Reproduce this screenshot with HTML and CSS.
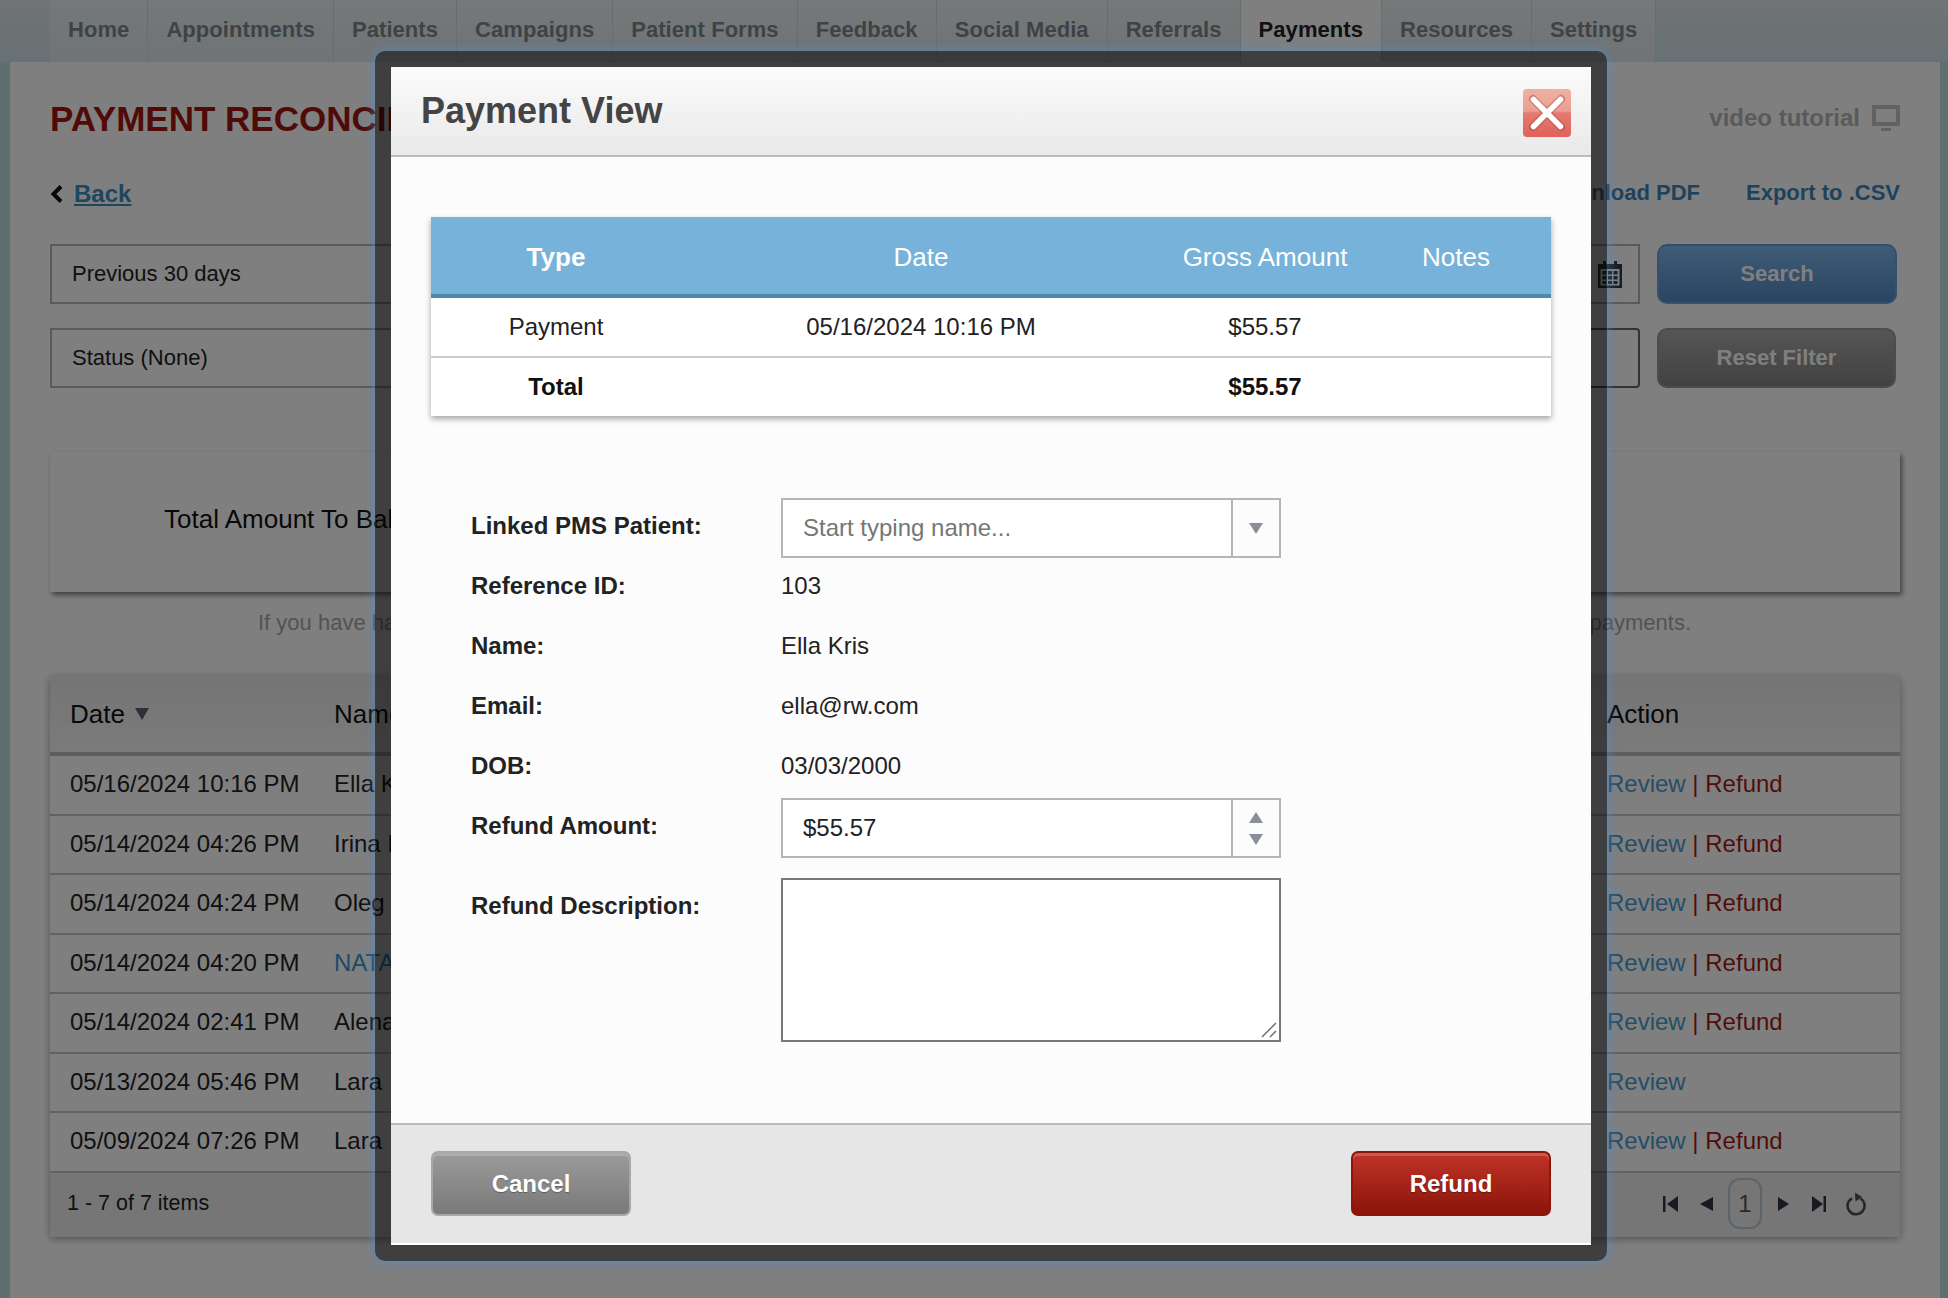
FILE: index.html
```html
<!DOCTYPE html>
<html lang="en">
<head>
<meta charset="utf-8">
<title>Payment Reconciliation</title>
<link rel="stylesheet" href="styles.css">
</head>
<body>
<nav class="topnav">
  <ul class="tabs">
    <li class="tab">Home</li>
    <li class="tab">Appointments</li>
    <li class="tab">Patients</li>
    <li class="tab">Campaigns</li>
    <li class="tab">Patient Forms</li>
    <li class="tab">Feedback</li>
    <li class="tab">Social Media</li>
    <li class="tab">Referrals</li>
    <li class="tab tab-active">Payments</li>
    <li class="tab">Resources</li>
    <li class="tab">Settings</li>
  </ul>
</nav>
<main class="panel">
  <div class="title-row">
    <h1 class="page-title">PAYMENT RECONCILIATION</h1>
    <a class="video-link">video tutorial
      <svg class="monitor" width="28" height="26" viewBox="0 0 28 26"><path d="M0 0h28v21H0z M4 4v13h20V4z" fill="#c4c4c4" fill-rule="evenodd"/><path d="M9 23h10v3H9z" fill="#c4c4c4"/></svg>
    </a>
  </div>
  <div class="link-row">
    <a class="back"><svg width="13" height="18" viewBox="0 0 13 18"><path d="M11 1.500 3.500 9l7.500 7.500" fill="none" stroke="#111" stroke-width="4"/></svg><span class="back-text">Back</span></a>
    <div class="exports"><a class="export">Download PDF</a><a class="export">Export to .CSV</a></div>
  </div>
  <div class="filters">
    <div class="filter">Previous 30 days</div>
    <div class="filter filter-date">
      <svg width="24" height="28" viewBox="0 0 24 28"><path d="M0 4h5V1h3v3h8V1h3v3h5v24H0z M2.500 9v16.500h19V9z" fill="#333b46" fill-rule="evenodd"/><g fill="#333b46"><rect x="4.500" y="11" width="4" height="3.500"/><rect x="10" y="11" width="4" height="3.500"/><rect x="15.500" y="11" width="4" height="3.500"/><rect x="4.500" y="16" width="4" height="3.500"/><rect x="10" y="16" width="4" height="3.500"/><rect x="15.500" y="16" width="4" height="3.500"/><rect x="4.500" y="21" width="4" height="3"/><rect x="10" y="21" width="4" height="3"/><rect x="15.500" y="21" width="4" height="3"/></g></svg>
    </div>
    <button class="btn-search">Search</button>
    <div class="filter">Status (None)</div>
    <div class="filter filter-dark"></div>
    <button class="btn-reset">Reset Filter</button>
  </div>
  <section class="total-card"><span class="total-text">Total Amount To Balance</span></section>
  <p class="note"><span>If you have had</span><span>payments.</span></p>
  <section class="grid">
    <div class="grid-head">
      <div class="cell">Date <span class="sort"></span></div>
      <div class="cell">Name</div>
      <div class="cell">Action</div>
    </div>
    <div class="grid-row"><div>05/16/2024 10:16 PM</div><div>Ella Kris</div><div><a class="review">Review</a><span class="sep"> | </span><a class="refund">Refund</a></div></div>
    <div class="grid-row"><div>05/14/2024 04:26 PM</div><div>Irina I</div><div><a class="review">Review</a><span class="sep"> | </span><a class="refund">Refund</a></div></div>
    <div class="grid-row"><div>05/14/2024 04:24 PM</div><div>Oleg</div><div><a class="review">Review</a><span class="sep"> | </span><a class="refund">Refund</a></div></div>
    <div class="grid-row"><div>05/14/2024 04:20 PM</div><div class="name-link">NATA</div><div><a class="review">Review</a><span class="sep"> | </span><a class="refund">Refund</a></div></div>
    <div class="grid-row"><div>05/14/2024 02:41 PM</div><div>Alena</div><div><a class="review">Review</a><span class="sep"> | </span><a class="refund">Refund</a></div></div>
    <div class="grid-row"><div>05/13/2024 05:46 PM</div><div>Lara</div><div><a class="review">Review</a></div></div>
    <div class="grid-row"><div>05/09/2024 07:26 PM</div><div>Lara</div><div><a class="review">Review</a><span class="sep"> | </span><a class="refund">Refund</a></div></div>
    <div class="grid-foot">
      <span>1 - 7 of 7 items</span>
      <div class="pager">
        <svg width="15" height="16" viewBox="0 0 15 16"><path d="M0 0h2.500v16H0z M15 0v16L4 8z" fill="#2e3440"/></svg>
        <svg class="pager-prev" width="13" height="14" viewBox="0 0 13 14"><path d="M13 0v14L0 7z" fill="#2e3440"/></svg>
        <span class="page-num">1</span>
        <svg class="pager-next" width="11" height="14" viewBox="0 0 11 14"><path d="M0 0v14l11-7z" fill="#2e3440"/></svg>
        <svg class="pager-last" width="14" height="16" viewBox="0 0 14 16"><path d="M0 0v16l11-8z M11.500 0H14v16h-2.500z" fill="#2e3440"/></svg>
        <svg class="pager-refresh" width="21" height="24" viewBox="0 0 21 24"><path d="M6 6.300A8.500 8.500 0 1 0 14.500 6.500" fill="none" stroke="#4b4f58" stroke-width="2.600"/><path d="M9 0.500 16 5 9.500 9.500z" fill="#4b4f58"/></svg>
      </div>
    </div>
  </section>
</main>

<div class="overlay"></div>

<div class="modal" role="dialog">
  <header class="modal-head">
    <h2 class="modal-title">Payment View</h2>
    <button class="close" aria-label="Close">
      <svg width="48" height="48" viewBox="0 0 48 48"><path d="M10 10 38 38M38 10 10 38" stroke="#9a3a33" stroke-opacity=".4" stroke-width="8" stroke-linecap="round"/><path d="M10.500 10.500 37.500 37.500M37.500 10.500 10.500 37.500" stroke="#fff" stroke-width="5.500" stroke-linecap="round"/></svg>
    </button>
  </header>
  <div class="modal-body">
    <div class="pay-table">
      <div class="pay-row pay-head"><div class="strong">Type</div><div>Date</div><div>Gross Amount</div><div>Notes</div></div>
      <div class="pay-row"><div>Payment</div><div>05/16/2024 10:16 PM</div><div>$55.57</div><div></div></div>
      <div class="pay-row pay-total"><div>Total</div><div></div><div>$55.57</div><div></div></div>
    </div>
    <form class="form">
      <div class="form-row">
        <label class="form-label">Linked PMS Patient:</label>
        <div class="combo"><input class="combo-input" placeholder="Start typing name..."><span class="combo-btn"><i class="arrow-down"></i></span></div>
      </div>
      <div class="form-row"><label class="form-label">Reference ID:</label><span class="form-value">103</span></div>
      <div class="form-row"><label class="form-label">Name:</label><span class="form-value">Ella Kris</span></div>
      <div class="form-row"><label class="form-label">Email:</label><span class="form-value">ella@rw.com</span></div>
      <div class="form-row"><label class="form-label">DOB:</label><span class="form-value">03/03/2000</span></div>
      <div class="form-row">
        <label class="form-label">Refund Amount:</label>
        <div class="combo"><input class="combo-input" value="$55.57"><span class="combo-btn combo-spin"><i class="arrow-up"></i><i class="arrow-down"></i></span></div>
      </div>
      <div class="form-row form-row-desc">
        <label class="form-label">Refund Description:</label>
        <div class="desc-wrap">
          <textarea class="desc"></textarea>
          <svg class="grip" width="16" height="16" viewBox="0 0 16 16"><path d="M1 15 15 1M9 15l6-6" fill="none" stroke="#6e6e6e" stroke-width="1.500"/></svg>
        </div>
      </div>
    </form>
  </div>
  <footer class="modal-foot">
    <button class="btn-cancel">Cancel</button>
    <button class="btn-refund">Refund</button>
  </footer>
</div>
</body>
</html>
```
FILE: styles.css
```css
* { box-sizing: border-box; }
html, body { margin: 0; height: 1298px; overflow: hidden; }
body {
  position: relative;
  font-family: "Liberation Sans", Arial, sans-serif;
  font-size: 24px;
  color: #222;
  background: #bedcde;
}
a { cursor: pointer; }

/* top navigation */
.topnav {
  height: 62px;
  padding-left: 50px;
  background: linear-gradient(#e0e8ea, #cfe2e8);
}
.tabs { display: flex; height: 62px; margin: 0; padding: 0; list-style: none; }
.tab {
  padding: 0 18px;
  line-height: 59px;
  font-size: 22px;
  font-weight: 700;
  letter-spacing: .06px;
  color: #7d868b;
  background: linear-gradient(#ecf1f3, #dfe8ec);
  border-right: 1px solid #d3dadd;
}
.tab-active { color: #222; background: #fff; }

/* page panel */
.panel {
  margin: 0 8px 0 10px;
  height: 1236px;
  padding: 29px 40px 0;
  background: #fff;
}
.title-row { display: flex; justify-content: space-between; align-items: center; height: 56px; }
.page-title { margin: 0; font-size: 35px; font-weight: 700; color: #a01510; }
.video-link { display: flex; align-items: center; gap: 12px; margin-top: -2px; font-weight: 700; color: #b4b4b4; }
.link-row { display: flex; justify-content: space-between; align-items: center; height: 60px; margin-top: 17px; }
.back { display: flex; align-items: center; gap: 11px; font-weight: 700; color: #3c8cbf; }
.back-text { text-decoration: underline; }
.exports { display: flex; gap: 46px; margin-top: -2px; }
.export { font-weight: 700; font-size: 22px; color: #3d85b8; }

.filters {
  display: grid;
  grid-template-columns: 1fr 1fr 244px;
  grid-auto-rows: 60px;
  column-gap: 16px;
  row-gap: 24px;
  margin-top: 20px;
}
.filter {
  display: flex;
  align-items: center;
  justify-content: flex-start;
  padding: 0 20px;
  font-size: 22px;
  border: 2px solid #b5b5b5;
}
.filter-date { justify-content: flex-end; padding-right: 16px; }
.filter-dark { border-color: #666; border-radius: 4px; }
.btn-search, .btn-reset {
  font: 700 22px "Liberation Sans", Arial, sans-serif;
  color: #fff;
  border-radius: 10px;
  margin-left: 1px;
}
.btn-search {
  width: 240px;
  background: linear-gradient(#7fb7ee, #528ac2);
  border: 2px solid #6aa2da;
  border-top-color: #5e9cd6;
}
.btn-reset {
  width: 239px;
  background: linear-gradient(#ababab, #848484);
  border: 2px solid #989898;
}

.total-card {
  height: 140px;
  margin-top: 64px;
  padding: 52px 0 0 114px;
  background: #fff;
  box-shadow: 2px 3px 5px rgba(0, 0, 0, .5);
}
.total-text { font-size: 26px; color: #111; }
.note {
  display: flex;
  justify-content: space-between;
  width: 1433px;
  margin: 16px 0 0 208px;
  line-height: 30px;
  font-size: 22px;
  color: #a6a6a6;
}

.grid {
  margin-top: 38px;
  background: #fff;
  box-shadow: 0 2px 8px rgba(0, 0, 0, .35);
}
.grid-head, .grid-row {
  display: grid;
  grid-template-columns: 264px 1273px 1fr;
  padding-left: 20px;
  align-items: center;
}
.grid-head {
  height: 80px;
  font-size: 26px;
  color: #111;
  background: linear-gradient(#eaeaea, #f6f6f6);
  border-bottom: 4px solid #bcbcbc;
}
.sort {
  display: inline-block;
  width: 0;
  height: 0;
  margin-left: 3px;
  vertical-align: 3px;
  border-left: 7px solid transparent;
  border-right: 7px solid transparent;
  border-top: 12px solid #596172;
}
.grid-row { height: 59.5px; padding-bottom: 1px; border-bottom: 2px solid #c4c4c4; color: #222; }
.name-link { color: #3f92c7; }
.review { color: #4a9ccf; }
.sep { color: #a51b14; }
.refund { color: #a51b14; }
.grid-foot {
  display: flex;
  justify-content: space-between;
  align-items: center;
  height: 64px;
  padding: 0 33px 2px 17px;
  font-size: 21.500px;
  background: #ececec;
}
.pager { display: flex; align-items: center; }
.page-num {
  width: 34px;
  height: 51px;
  margin: 0 16px 0 15px;
  line-height: 47px;
  text-align: center;
  font-size: 24px;
  color: #555;
  border: 2px solid #b6c6d6;
  border-radius: 12px;
}
.pager-prev { margin-left: 22px; }
.pager-last { margin-left: 23px; }
.pager-refresh { margin-left: 20px; }

/* dimming layer */
.overlay { position: absolute; inset: 0; background: rgba(0, 0, 0, .5); }

/* modal */
.modal {
  position: absolute;
  left: 375px;
  top: 51px;
  width: 1232px;
  height: 1210px;
  display: flex;
  flex-direction: column;
  border: 16px solid rgba(0, 0, 0, .5);
  border-radius: 10px;
  background: #fff padding-box;
  box-shadow: 0 0 12px 1px rgba(75, 145, 215, .55);
  padding-bottom: 2px;
}
.modal-head {
  display: flex;
  justify-content: space-between;
  align-items: flex-start;
  flex: none;
  height: 90px;
  padding: 22px 20px 0 30px;
  background: linear-gradient(#fbfbfb, #e9e9e9);
  border-bottom: 2px solid #bcbcbc;
}
.modal-title { margin: 0; font-size: 36px; line-height: 44px; color: #444; }
.close {
  width: 48px;
  height: 48px;
  padding: 0;
  border: 0;
  border-radius: 4px;
  background: linear-gradient(#efb0a4 0, #eb9f91 46%, #e57a6f 50%, #df625b 100%);
}
.close svg { display: block; }
.modal-body {
  flex: 1;
  padding: 60px 40px 0;
  background: #fcfcfc;
}
.pay-table { background: #fff; box-shadow: 0 3px 6px rgba(0, 0, 0, .35); }
.pay-row {
  display: grid;
  grid-template-columns: 248px 484px 204px 178px;
  height: 60px;
  padding-right: 6px;
  align-items: center;
  text-align: center;
  border-bottom: 2px solid #ccc;
}
.pay-row > :first-child { padding-left: 2px; }
.pay-head {
  height: 81px;
  padding-top: 4px;
  font-size: 26px;
  color: #fff;
  background: #76b2d9;
  border-bottom: 4px solid #4f87ad;
}
.strong { font-weight: 700; }
.pay-total { height: 58px; font-weight: 700; border-bottom: 0; color: #111; }

.form { margin-top: 82px; padding-left: 40px; }
.form-row { display: flex; align-items: flex-start; height: 60px; }
.form-row-desc { height: auto; margin-top: 20px; }
.form-label { flex: none; width: 310px; line-height: 56px; font-weight: 700; color: #222; }
.form-value { line-height: 56px; }
.combo {
  display: flex;
  width: 500px;
  height: 60px;
  background: #fff;
  border: 2px solid #b5b5b5;
}
.combo-input {
  flex: 1;
  min-width: 0;
  padding: 0 20px;
  border: 0;
  outline: 0;
  background: transparent;
  font: 24px "Liberation Sans", Arial, sans-serif;
  color: #222;
}
.combo-input::placeholder { color: #767676; opacity: 1; }
.combo-btn {
  display: flex;
  flex: none;
  flex-direction: column;
  align-items: center;
  justify-content: center;
  gap: 11px;
  width: 48px;
  background: #fcfcfc;
  border-left: 2px solid #b5b5b5;
}
.arrow-down, .arrow-up {
  display: block;
  width: 0;
  height: 0;
  border-left: 7px solid transparent;
  border-right: 7px solid transparent;
}
.arrow-down { border-top: 11px solid #8a8e99; }
.arrow-up { border-bottom: 11px solid #8a8e99; }
.desc-wrap { position: relative; width: 500px; height: 164px; }
.desc {
  display: block;
  width: 100%;
  height: 100%;
  resize: none;
  background: #fff;
  border: 2px solid #777;
  outline: 0;
}
.grip { position: absolute; right: 4px; bottom: 4px; }

.modal-foot {
  display: flex;
  justify-content: space-between;
  align-items: flex-start;
  flex: none;
  height: 120px;
  padding: 26px 40px 0;
  background: #e6e6e6;
  border-top: 2px solid #bcbcbc;
}
.btn-cancel, .btn-refund {
  width: 200px;
  height: 65px;
  font: 700 24px "Liberation Sans", Arial, sans-serif;
  color: #fff;
  border-radius: 7px;
  text-shadow: 0 1px 1px rgba(0, 0, 0, .3);
}
.btn-cancel {
  background: linear-gradient(#9b9b9b, #797979);
  border: 2px solid #a8a8a8;
  box-shadow: inset 0 3px 0 rgba(255, 255, 255, .18);
}
.btn-refund {
  background: linear-gradient(#c03329, #8b1409);
  border: 2px solid #8e1509;
  box-shadow: inset 0 3px 0 rgba(255, 255, 255, .2);
}
```
